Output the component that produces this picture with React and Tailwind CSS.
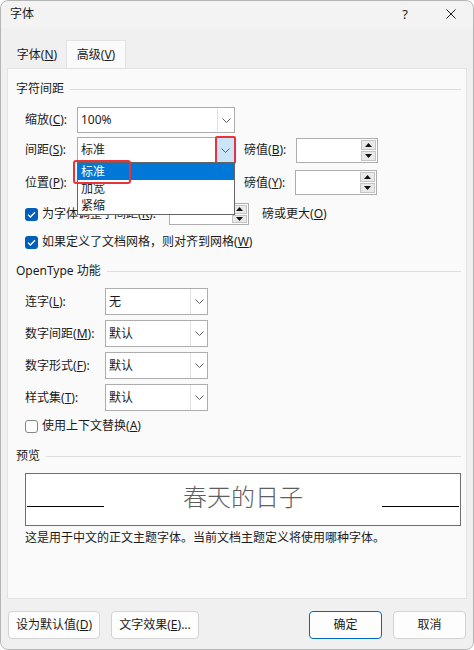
import React from "react";

const ui = "[font-family:'Noto_Sans','Noto_Sans_CJK_SC',sans-serif]";

function Chevron() {
  return (
    <svg width="9" height="5" viewBox="0 0 9 5" fill="none">
      <path d="M0.5 0.5 L4.5 4.5 L8.5 0.5" stroke="#5f5f5f" strokeWidth="1" />
    </svg>
  );
}

function Combo({ value, width, height = "h-[26px]", active, children }) {
  return (
    <div className={`relative flex ${height} ${width} border border-[#adadad] bg-white`}>
      <div className="flex flex-1 items-center pl-[3px] text-[12px] text-[#1b1b1b]">{value}</div>
      {active ? (
        <div className="relative flex w-[18px] items-center justify-center bg-[#cce4f7]">
          <Chevron />
          <div className="absolute -bottom-[2px] -left-[1px] -right-[2px] -top-[2px] rounded-[2px] border-2 border-[#e8323c]" />
        </div>
      ) : (
        <div className="flex w-[17px] items-center justify-center border-l border-[#e2e2e2]">
          <Chevron />
        </div>
      )}
      {children}
    </div>
  );
}

function Spin({ width = "w-[82px]", height = "h-[25px]" }) {
  return (
    <div className={`flex ${width} ${height} border border-[#adadad] bg-white p-px`}>
      <div className="flex-1" />
      <div className="flex w-[15px] flex-col gap-px">
        <div className="flex flex-1 items-center justify-center border border-[#c4c4c4] bg-[#e9e9e9]">
          <svg width="7" height="4" viewBox="0 0 7 4">
            <path d="M3.5 0 L7 4 L0 4 Z" fill="#111" />
          </svg>
        </div>
        <div className="flex flex-1 items-center justify-center border border-[#c4c4c4] bg-[#e9e9e9]">
          <svg width="7" height="4" viewBox="0 0 7 4">
            <path d="M0 0 L7 0 L3.5 4 Z" fill="#111" />
          </svg>
        </div>
      </div>
    </div>
  );
}

function Check({ checked }) {
  if (!checked) {
    return <div className="h-[13px] w-[13px] shrink-0 rounded-[3px] border border-[#858585] bg-white" />;
  }
  return (
    <div className="flex h-[13px] w-[13px] shrink-0 items-center justify-center rounded-[3px] bg-[#005fb8]">
      <svg width="9" height="7" viewBox="0 0 9 7" fill="none">
        <path d="M1 3.6 L3.4 6 L8 1.2" stroke="#fff" strokeWidth="1.3" />
      </svg>
    </div>
  );
}

function Section({ title, className = "" }) {
  return (
    <div className={`flex h-[16px] items-center ${className}`}>
      <span className="text-[12px] leading-[16px] text-[#1b1b1b]">{title}</span>
      <div className="ml-[6px] h-px flex-1 bg-[#dddddd]" />
    </div>
  );
}

function Key({ label, k, tail = ":" }) {
  return (
    <span>
      {label}(<u>{k}</u>){tail}
    </span>
  );
}

function Button({ children, width, primary }) {
  return (
    <button
      className={`flex h-[28px] ${width} items-center justify-center rounded-[4px] border text-[12px] text-[#1b1b1b] ${
        primary ? "border-[#0067c0] bg-[#fdfdfd]" : "border-[#d3d3d3] bg-[#fdfdfd]"
      }`}
    >
      {children}
    </button>
  );
}

export default function App() {
  const openType = [
    { label: "连字", k: "L", value: "无" },
    { label: "数字间距", k: "M", value: "默认" },
    { label: "数字形式", k: "F", value: "默认" },
    { label: "样式集", k: "T", value: "默认" },
  ];

  return (
    <div className={`relative h-[650px] w-[474px] overflow-hidden rounded-[8px] bg-[#f0f0f0] ${ui} text-[12px] text-[#1b1b1b]`}>
      {/* title bar */}
      <div className="flex h-[28px] items-center bg-[#f3f3f3] pl-[10px] pr-[18px]">
        <span className="leading-[16px]">字体</span>
        <span className="ml-auto text-[13px] leading-[16px]">?</span>
        <svg className="ml-[38px]" width="10" height="10" viewBox="0 0 10 10">
          <path d="M0.5 0.5 L9.5 9.5 M9.5 0.5 L0.5 9.5" stroke="#1b1b1b" strokeWidth="1" />
        </svg>
      </div>

      {/* tabs */}
      <div className="mt-[12px] flex pl-[8px]">
        <div className="flex h-[28px] w-[58px] items-center justify-center pt-[2px]">
          <Key label="字体" k="N" tail="" />
        </div>
        <div className="relative z-10 -mb-px flex h-[28px] w-[60px] items-center justify-center border border-b-0 border-[#e3e3e3] bg-[#fafafa] pt-[1px]">
          <Key label="高级" k="V" tail="" />
        </div>
      </div>

      {/* panel */}
      <div className="mx-[7px] h-[531px] border border-[#e3e3e3] bg-[#fafafa] pl-[8px] pr-[5px] pt-[12px]">
        <Section title="字符间距" />
        <div className="pl-[9px]">
          <div className="mt-[10px] flex h-[26px] items-center">
            <span className="w-[52px]"><Key label="缩放" k="C" /></span>
            <Combo value="100%" width="w-[158px]" />
          </div>

          <div className="relative z-20 mt-[4px] flex h-[26px] items-center">
            <span className="w-[52px]"><Key label="间距" k="S" /></span>
            <Combo value="标准" width="w-[158px]" active>
              {/* open list */}
              <div className="absolute -left-px top-full w-[158px] border border-[#646464] bg-white">
                <div className="relative flex h-[17px] items-center bg-[#0078d7] pl-[3px] text-white">
                  标准
                  <div className="absolute -left-[5px] -top-[3px] h-[24px] w-[58px] rounded-[3px] border-2 border-[#e8323c]" />
                </div>
                <div className="flex h-[17px] items-center pl-[3px]">加宽</div>
                <div className="flex h-[17px] items-center pl-[3px]">紧缩</div>
              </div>
            </Combo>
            <span className="ml-[9px] w-[52px]"><Key label="磅值" k="B" /></span>
            <Spin />
          </div>

          <div className="mt-[7px] flex h-[25px] items-center">
            <span className="w-[52px]"><Key label="位置" k="P" /></span>
            <Combo value="标准" width="w-[158px]" height="h-[25px]" />
            <span className="ml-[9px] w-[51px]"><Key label="磅值" k="Y" /></span>
            <Spin />
          </div>

          <div className="mt-[8px] flex h-[22px] items-center">
            <Check checked />
            <span className="ml-[4px] w-[127px] whitespace-nowrap"><Key label="为字体调整字间距" k="K" /></span>
            <Spin width="w-[80px]" height="h-[22px]" />
            <span className="ml-[13px]"><Key label="磅或更大" k="O" tail="" /></span>
          </div>

          <div className="mt-[9px] flex h-[16px] items-center">
            <Check checked />
            <span className="ml-[4px]"><Key label="如果定义了文档网格，则对齐到网格" k="W" tail="" /></span>
          </div>
        </div>

        <Section title="OpenType 功能" className="mt-[13px]" />
        <div className="pl-[9px]">
          <div className="mt-[9px] flex flex-col gap-[5px]">
            {openType.map((row) => (
              <div key={row.k} className="flex h-[27px] items-center">
                <span className="w-[80px]"><Key label={row.label} k={row.k} /></span>
                <Combo value={row.value} width="w-[103px]" height="h-[27px]" />
              </div>
            ))}
          </div>
          <div className="mt-[7px] flex h-[16px] items-center">
            <Check />
            <span className="ml-[4px]"><Key label="使用上下文替换" k="A" tail="" /></span>
          </div>
        </div>

        <Section title="预览" className="mt-[14px]" />
        <div className="pl-[9px]">
          <div className="mt-[9px] flex h-[53px] items-end border border-[#6e6e6e] bg-white px-px">
            <div className="mb-[18px] h-px w-[77px] bg-black" />
            <div className="flex flex-1 justify-center self-center pb-[5px] text-[24px] font-light leading-[28px] text-[#5e5e5e]">
              春天的日子
            </div>
            <div className="mb-[18px] h-px w-[77px] bg-black" />
          </div>
          <div className="mt-[4px] leading-[16px]">这是用于中文的正文主题字体。当前文档主题定义将使用哪种字体。</div>
        </div>
      </div>

      {/* footer buttons */}
      <div className="mt-[12px] flex px-[8px]">
        <Button width="w-[92px]"><Key label="设为默认值" k="D" tail="" /></Button>
        <Button width="ml-[11px] w-[88px]"><Key label="文字效果" k="E" tail="..." /></Button>
        <Button width="ml-auto w-[73px]" primary>确定</Button>
        <Button width="ml-[11px] w-[73px]">取消</Button>
      </div>

      <div className="pointer-events-none absolute inset-0 rounded-[8px] border border-[#b5b5b5]" />
    </div>
  );
}
